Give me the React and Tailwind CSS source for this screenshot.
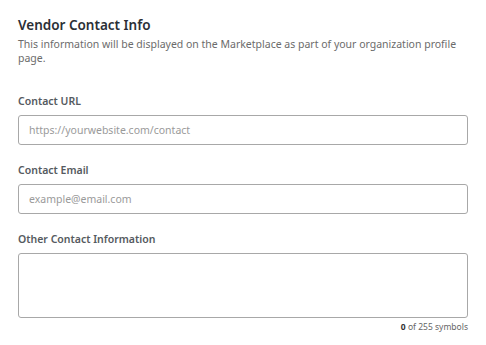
export default function App() {
  return (
    <div className="min-h-screen bg-white font-['Noto_Sans']">
      <div className="w-[450px] ml-[18px] pt-[15px]">
        <h2 className="text-[13.5px] leading-[20px] font-semibold text-[#2b2f36]">
          Vendor Contact Info
        </h2>
        <p className="mt-[2px] text-[10.5px] leading-[14px] text-[#6b6b6b]">
          This information will be displayed on the Marketplace as part of your organization profile page.
        </p>

        <div className="mt-[28px]">
          <label className="block text-[10.5px] leading-[16px] font-semibold text-[#555a60]">
            Contact URL
          </label>
          <input
            type="text"
            placeholder="https://yourwebsite.com/contact"
            className="mt-[6px] block w-full h-[30px] px-[10px] rounded-[3px] border border-[#a8a8a8] text-[10.5px] text-[#333] placeholder:text-[#9a9a9a] outline-none"
          />
        </div>

        <div className="mt-[17px]">
          <label className="block text-[10.5px] leading-[16px] font-semibold text-[#555a60]">
            Contact Email
          </label>
          <input
            type="text"
            placeholder="example@email.com"
            className="mt-[6px] block w-full h-[30px] px-[10px] rounded-[3px] border border-[#a8a8a8] text-[10.5px] text-[#333] placeholder:text-[#9a9a9a] outline-none"
          />
        </div>

        <div className="mt-[17px]">
          <label className="block text-[10.5px] leading-[16px] font-semibold text-[#555a60]">
            Other Contact Information
          </label>
          <textarea
            className="mt-[6px] block w-full h-[65px] px-[10px] py-[6px] rounded-[3px] border border-[#a8a8a8] text-[10.5px] text-[#333] resize-none outline-none"
          />
          <p className="mt-[3px] text-right text-[8.5px] leading-[12px] text-[#666]">
            <span className="font-bold text-[#333]">0</span> of 255 symbols
          </p>
        </div>
      </div>
    </div>
  )
}
